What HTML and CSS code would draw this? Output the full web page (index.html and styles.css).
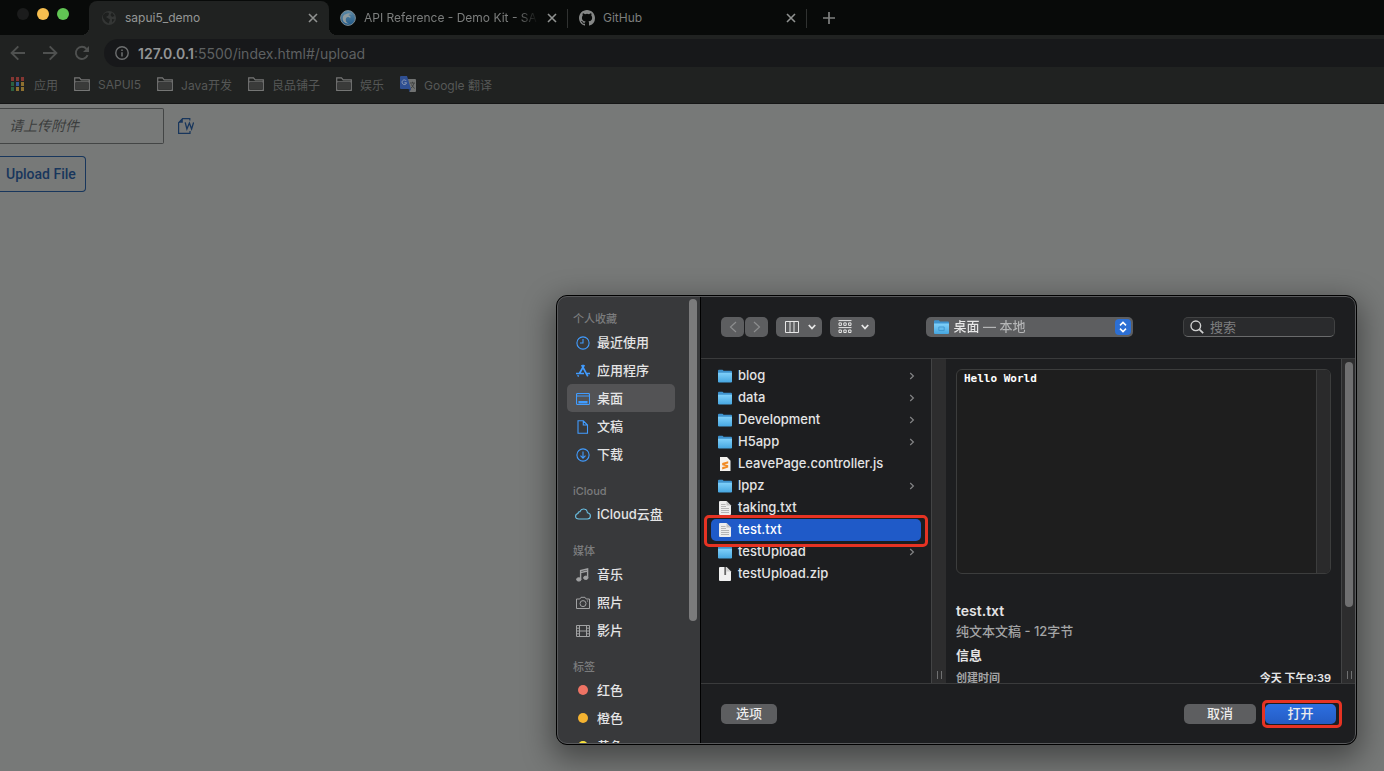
FILE: index.html
```html
<!DOCTYPE html>
<html lang="zh-CN">
<head>
<meta charset="utf-8">
<title>sapui5_demo</title>
<link rel="stylesheet" href="styles.css">
</head>
<body>
<svg class="defs" aria-hidden="true">
  <defs>
    <linearGradient id="folder-fill" x1="0" y1="0" x2="0" y2="1"><stop offset="0" stop-color="#7fd0fa"/><stop offset="1" stop-color="#46a6e0"/></linearGradient>
    <linearGradient id="swirl-fill" x1="0" y1="0" x2="0" y2="1"><stop offset="0" stop-color="#5d8aa6"/><stop offset="1" stop-color="#1f5888"/></linearGradient>
  </defs>
  <symbol id="folder" viewBox="0 0 14 13"><path d="M0 1.2Q0 .2 1 .2H4.5L5.6 1.3H13Q14 1.3 14 2.3V4H0Z" fill="#3e92cd"/><path d="M0 3.3H14V12.2Q14 13 13 13H1Q0 13 0 12.2Z" fill="url(#folder-fill)"/></symbol>
  <symbol id="doc" viewBox="0 0 14 14"><path d="M1 1Q1 0 2 0H8.5L13 4.5V13Q13 14 12 14H2Q1 14 1 13Z" fill="#ededed"/><path d="M8.5 0V4.5H13Z" fill="#c4c4c4"/><path d="M3 3.5H7.5M3 5.5H8M3 7.5H11M3 9.5H11M3 11.5H11" stroke="#a6a6a6" stroke-width=".8"/></symbol>
  <symbol id="js" viewBox="0 0 14 14"><path d="M2 0H9L12.5 3.8V14H2Z" fill="#f4f2ee"/><path d="M10.2 4.2L4.2 6V8.2L8 9.2L4.2 10V12.4L10.2 10.4V8.2L6.6 7.2L10.2 6.4Z" fill="#f18b24"/></symbol>
  <symbol id="zip" viewBox="0 0 14 14"><path d="M1 1Q1 0 2 0H8.5L13 4.5V13Q13 14 12 14H2Q1 14 1 13Z" fill="#f0f0f0"/><path d="M8.5 0V4.5H13Z" fill="#cfcfcf"/><path d="M7.2 0V8" stroke="#666" stroke-width="1.8"/></symbol>
  <symbol id="chev" viewBox="0 0 6 8"><path d="M1.2 1L4.4 4L1.2 7" fill="none" stroke="#838485" stroke-width="1.2"/></symbol>
  <symbol id="close" viewBox="0 0 10 10"><path d="M1 1L9 9M9 1L1 9" stroke="currentColor" stroke-width="1.6"/></symbol>
  <symbol id="bookmark-folder" viewBox="0 0 16 14"><path d="M.7 13.3V.9H5.5L7.2 2.8H15.3V13.3Z" fill="none" stroke="#757675" stroke-width="1.2"/><path d="M.7 4.8H15.3" stroke="#757675"/><path d="M2 6H14V12H2Z" fill="#3a3b3a"/></symbol>
</svg>

<header class="browser">
  <nav class="tabs" aria-label="标签页">
    <div class="lights"><i class="light off"></i><i class="light yellow"></i><i class="light green"></i></div>
    <div class="tab active">
      <svg class="fav" viewBox="0 0 16 16"><circle cx="8" cy="8" r="7" fill="#343635"/><path d="M2 5Q5 1.6 8 3L7.4 5.6L5 7L9 9.4L7.6 13.4L4.6 11.6L2 8ZM11 2.6L13.6 6L11 7L9.4 5ZM11 9L13.6 9.6L11 12.4Z" fill="#1e201f"/></svg>
      <span class="tab-title">sapui5_demo</span>
      <button class="tab-close" aria-label="关闭"><svg><use href="#close"/></svg></button>
    </div>
    <div class="tab">
      <svg class="fav" viewBox="0 0 16 16"><circle cx="8" cy="8" r="7.4" fill="url(#swirl-fill)" stroke="#7c8990" stroke-width="1"/><path d="M3.4 11.5Q1 5 6.3 4Q9 2.5 12.2 4.5Q9.5 3.8 8.5 5.2Q11.5 5.8 10 8.2Q9.5 6.8 7.8 7Q5 7.8 6 11.5Q7 13.2 9 13.5Q5.3 14 3.4 11.5Z" fill="#8f9a9e"/></svg>
      <span class="tab-title fade">API Reference - Demo Kit - SAPUI5</span>
      <button class="tab-close" aria-label="关闭"><svg><use href="#close"/></svg></button>
    </div>
    <div class="tab">
      <svg class="fav" viewBox="0 0 16 16"><path fill="#858786" d="M8 0C3.58 0 0 3.58 0 8c0 3.54 2.29 6.53 5.47 7.59.4.07.55-.17.55-.38 0-.19-.01-.82-.01-1.49-2.01.37-2.53-.49-2.69-.94-.09-.23-.48-.94-.82-1.13-.28-.15-.68-.52-.01-.53.63-.01 1.08.58 1.23.82.72 1.21 1.87.87 2.33.66.07-.52.28-.87.51-1.07-1.78-.2-3.64-.89-3.64-3.95 0-.87.31-1.59.82-2.15-.08-.2-.36-1.02.08-2.12 0 0 .67-.21 2.2.82a7.6 7.6 0 0 1 4 0c1.53-1.04 2.2-.82 2.2-.82.44 1.1.16 1.92.08 2.12.51.56.82 1.27.82 2.15 0 3.07-1.87 3.75-3.65 3.95.29.25.54.73.54 1.48 0 1.07-.01 1.93-.01 2.2 0 .21.15.46.55.38A8 8 0 0 0 16 8c0-4.42-3.58-8-8-8Z"/></svg>
      <span class="tab-title">GitHub</span>
      <button class="tab-close" aria-label="关闭"><svg><use href="#close"/></svg></button>
    </div>
    <button class="new-tab" aria-label="新标签页"><svg viewBox="0 0 12 12"><path d="M6 0V12M0 6H12" stroke="#7f8180" stroke-width="1.7"/></svg></button>
  </nav>

  <div class="address-row">
    <button class="nav" aria-label="后退"><svg viewBox="0 0 16 16"><path d="M15 8H2M8.3 1.3L1.6 8L8.3 14.7" fill="none" stroke="#4f5150" stroke-width="1.9"/></svg></button>
    <button class="nav" aria-label="前进"><svg viewBox="0 0 16 16"><path d="M1 8H14M7.7 1.3L14.4 8L7.7 14.7" fill="none" stroke="#4f5150" stroke-width="1.9"/></svg></button>
    <button class="nav" aria-label="重新加载"><svg viewBox="0 0 16 16"><path d="M13.6 10.2A6.1 6.1 0 1 1 12.5 3.8" fill="none" stroke="#4f5150" stroke-width="1.9"/><path d="M15 1V7H9Z" fill="#4f5150"/></svg></button>
    <div class="url">
      <svg viewBox="0 0 14 14"><circle cx="7" cy="7" r="6.2" fill="none" stroke="#6d6f70" stroke-width="1.4"/><path d="M7 6.2V10.5M7 3.4V5" stroke="#6d6f70" stroke-width="1.5"/></svg>
      <a href="#/upload"><b>127.0.0.1</b>:5500/index.html#/upload</a>
    </div>
  </div>

  <nav class="bookmarks" aria-label="书签">
    <a href="#apps"><svg class="apps" viewBox="0 0 13 14"><path d="M0 0H3V4H0ZM5 0H8V4H5ZM10 0H13V4H10Z" fill="#853632"/><path d="M0 5H3V9H0Z" fill="#2b6040"/><path d="M5 5H8V9H5Z" fill="#335a96"/><path d="M10 5H13V9H10Z" fill="#8d7030"/><path d="M0 10H3V14H0Z" fill="#2b6040"/><path d="M5 10H8V14H5ZM10 10H13V14H10Z" fill="#8d7030"/></svg>应用</a>
    <a href="#sapui5"><svg><use href="#bookmark-folder"/></svg>SAPUI5</a>
    <a href="#java"><svg><use href="#bookmark-folder"/></svg>Java开发</a>
    <a href="#shop"><svg><use href="#bookmark-folder"/></svg>良品铺子</a>
    <a href="#fun"><svg><use href="#bookmark-folder"/></svg>娱乐</a>
    <a href="#translate"><svg class="gt" viewBox="0 0 16 16"><path d="M7 3H15Q16 3 16 4V15Q16 16 15 16H9.5Z" fill="#707271"/><path d="M1 0H7L11 13H1Q0 13 0 12V1Q0 0 1 0Z" fill="#2f4f92"/><path d="M8.5 13H11L9.5 16Z" fill="#243c70"/><path d="M6.3 5A2.3 2.3 0 1 0 6.6 6.8H4.4" fill="none" stroke="#8f9cb6"/><path d="M10 7H15M12.5 5.8V7M14 7Q13 11 10.8 12.3M11.5 8.5Q12.5 11 14.8 12.5" fill="none" stroke="#3c3e3d" stroke-width=".9"/></svg>Google 翻译</a>
  </nav>
</header>

<main class="page">
  <div class="uploader">
    <input class="file-field" type="text" placeholder="请上传附件" aria-label="请上传附件">
    <button class="browse" aria-label="选择文件"><svg viewBox="0 0 16 16"><path d="M11.8 2.4V.6H4.6L.6 4.8V15.4H12V13" fill="none" stroke="#18365c" stroke-width="1.2"/><path d="M.6 4.8H4.8V.5Z" fill="#18365c"/><path d="M7.2 4.4L8.9 11L11.4 5L13.6 11L15.6 4.4" fill="none" stroke="#18365c" stroke-width="1.3"/></svg></button>
  </div>
  <button class="upload">Upload File</button>
</main>

<section class="dialog" role="dialog" aria-label="打开">
  <aside class="sidebar">
    <nav class="places">
      <section>
        <h2>个人收藏</h2>
        <a href="#recent"><svg viewBox="0 0 14 14"><circle cx="7" cy="7" r="6.1"/><path d="M7 3V7H4"/></svg>最近使用</a>
        <a href="#applications"><svg viewBox="0 0 14 14"><path d="M8.3 1L3.4 9.5M5.7 1L11.8 12.4M0 9.5H8M10.5 9.5H14M2.5 11.3L1.8 12.5" stroke-width="1.7"/></svg>应用程序</a>
        <a class="current" href="#desktop"><svg viewBox="0 0 14 14"><rect x=".5" y="1.5" width="13" height="11" rx="1"/><path d="M.5 4H13.5"/><path d="M3 9.5H11V11H3Z" fill="#419cff"/></svg>桌面</a>
        <a href="#documents"><svg viewBox="0 0 14 14"><path d="M2 .8H7.3L11.5 5V13.2H2ZM7.3 .8V5H11.5"/></svg>文稿</a>
        <a href="#downloads"><svg viewBox="0 0 14 14"><circle cx="7" cy="7" r="6.1"/><path d="M7 3.5V10M4.5 7.7L7 10.2L9.5 7.7"/></svg>下载</a>
      </section>
      <section>
        <h2>iCloud</h2>
        <a href="#icloud"><svg class="cloud" viewBox="0 0 16 12"><path d="M4 11Q.6 11 .6 8.2Q.6 6 3 5.5Q3 3.5 5 3.6Q6 1 8.6 1Q12 1 12.4 4.8Q15.4 5.2 15.4 8Q15.4 11 12.4 11Z"/></svg>iCloud云盘</a>
      </section>
      <section>
        <h2>媒体</h2>
        <a href="#music"><svg class="media" viewBox="0 0 14 14"><path d="M4.6 11.2V2.6L11.6 1V9.6M4.6 4.6L11.6 3" stroke-width="1.4"/><ellipse cx="2.8" cy="11.4" rx="2.2" ry="1.7" fill="#a1a2a3"/><ellipse cx="9.8" cy="9.8" rx="2.2" ry="1.7" fill="#a1a2a3"/></svg>音乐</a>
        <a href="#photos"><svg class="media" viewBox="0 0 14 14"><path d="M.5 3H3.8L5 1.3H9L10.2 3H13.5V12.5H.5Z"/><circle cx="7" cy="7.6" r="3"/><path d="M11 5H12"/></svg>照片</a>
        <a href="#movies"><svg class="media" viewBox="0 0 14 14"><path d="M.5 1.5H13.5V12.5H.5ZM3.5 1.5V12.5M10.5 1.5V12.5M3.5 7H10.5M.5 4.2H3.5M.5 7H3.5M.5 9.8H3.5M10.5 4.2H13.5M10.5 7H13.5M10.5 9.8H13.5"/></svg>影片</a>
      </section>
      <section>
        <h2>标签</h2>
        <a href="#red"><i class="dot red"></i>红色</a>
        <a href="#orange"><i class="dot orange"></i>橙色</a>
        <a href="#yellow"><i class="dot yellow"></i>黄色</a>
      </section>
    </nav>
    <div class="thumb side-thumb"></div>
  </aside>

  <div class="content">
    <div class="toolbar">
      <div class="pair">
        <button class="tool arrow" aria-label="上一个"><svg viewBox="0 0 8 12"><path d="M7 1L1.5 6L7 11"/></svg></button>
        <button class="tool arrow" aria-label="下一个"><svg viewBox="0 0 8 12"><path d="M1 1L6.5 6L1 11"/></svg></button>
      </div>
      <button class="tool view" aria-label="分栏显示"><svg class="glyph" viewBox="0 0 14 12"><path d="M.5 .5H13.5V11.5H.5ZM5 .5V11.5M9 .5V11.5"/></svg><svg class="down" viewBox="0 0 8 6"><path d="M.8 1L4 4.5L7.2 1"/></svg></button>
      <button class="tool view grouping" aria-label="分组"><svg class="glyph group" viewBox="0 0 14 14"><path d="M.5 .6H13.5M.5 7.6H13.5M1 2.9H3.4V5.4H1ZM5.8 2.9H8.2V5.4H5.8ZM10.6 2.9H13V5.4H10.6ZM1 10H3.4V12.5H1ZM5.8 10H8.2V12.5H5.8ZM10.6 10H13V12.5H10.6Z"/></svg><svg class="down" viewBox="0 0 8 6"><path d="M.8 1L4 4.5L7.2 1"/></svg></button>
      <label class="location">
        <svg class="loc-folder" viewBox="0 0 14 13"><use href="#folder" width="14" height="13"/><path d="M4.5 6.5H9.5V9.8H4.5Z" fill="none" stroke="#3d94cd" stroke-width=".8"/></svg>
        <select aria-label="位置"><option>桌面 — 本地</option></select>
        <svg class="stepper" viewBox="0 0 16 16"><rect width="16" height="16" rx="4" fill="#2c6fd4"/><path d="M5 6.4L8 3.4L11 6.4M5 9.6L8 12.6L11 9.6" fill="none" stroke="#fff" stroke-width="1.5"/></svg>
      </label>
      <label class="search">
        <svg viewBox="0 0 14 14"><circle cx="5.8" cy="5.8" r="4.8" fill="none" stroke="#cfd0d0" stroke-width="1.4"/><path d="M9.3 9.3L13.2 13.2" stroke="#cfd0d0" stroke-width="1.7"/></svg>
        <input type="text" placeholder="搜索" aria-label="搜索">
      </label>
    </div>

    <div class="panes">
      <div class="files">
        <button class="file"><svg class="f"><use href="#folder"/></svg><span>blog</span><svg class="c"><use href="#chev"/></svg></button>
        <button class="file"><svg class="f"><use href="#folder"/></svg><span>data</span><svg class="c"><use href="#chev"/></svg></button>
        <button class="file"><svg class="f"><use href="#folder"/></svg><span>Development</span><svg class="c"><use href="#chev"/></svg></button>
        <button class="file"><svg class="f"><use href="#folder"/></svg><span>H5app</span><svg class="c"><use href="#chev"/></svg></button>
        <button class="file"><svg class="f"><use href="#js"/></svg><span>LeavePage.controller.js</span></button>
        <button class="file"><svg class="f"><use href="#folder"/></svg><span>lppz</span><svg class="c"><use href="#chev"/></svg></button>
        <button class="file"><svg class="f"><use href="#doc"/></svg><span>taking.txt</span></button>
        <button class="file selected marked"><svg class="f"><use href="#doc"/></svg><span>test.txt</span></button>
        <button class="file"><svg class="f"><use href="#folder"/></svg><span>testUpload</span><svg class="c"><use href="#chev"/></svg></button>
        <button class="file"><svg class="f"><use href="#zip"/></svg><span>testUpload.zip</span></button>
      </div>
      <div class="track"><i class="grip"></i></div>
      <div class="preview">
        <div class="sheet"><pre>Hello World</pre><div class="sheet-track"></div></div>
        <h3>test.txt</h3>
        <p class="kind">纯文本文稿 - 12字节</p>
        <h4>信息</h4>
        <p class="meta"><span>创建时间</span><b>今天 下午9:39</b></p>
      </div>
      <div class="track scroll"><div class="thumb"></div><i class="grip"></i></div>
    </div>

    <div class="actions">
      <button class="btn options">选项</button>
      <button class="btn">取消</button>
      <button class="btn primary marked">打开</button>
    </div>
  </div>
</section>
</body>
</html>
```

FILE: styles.css
```css
* { box-sizing: border-box; }
html, body { height: 100%; }
body {
  margin: 0;
  display: flex;
  flex-direction: column;
  overflow: hidden;
  position: relative;
  background: #777978;
  font-family: Inter, "Noto Sans CJK SC", sans-serif;
  font-size: 13px;
}
button { font: inherit; border: 0; padding: 0; background: none; color: inherit; }
a { color: inherit; text-decoration: none; }
h2, h3, h4, p, pre { margin: 0; }
svg { flex: none; display: block; }
.defs { position: absolute; width: 0; height: 0; }

/* Browser chrome */
.browser { background: #202221; border-bottom: 1px solid #151616; }
.tabs { display: flex; height: 35px; background: #080a09; font-size: 12px; color: #7c7e7d; }
.lights { display: flex; gap: 8px; width: 89px; padding: 8px 0 0 17px; }
.light { width: 12px; height: 12px; border-radius: 50%; }
.light.off { background: #1b1c1c; }
.light.yellow { background: #f6be4f; }
.light.green { background: #61c554; }
.tab { display: flex; align-items: center; width: 239px; padding: 0 11px; position: relative; }
.tab:not(.active)::after { content: ""; position: absolute; right: 0; top: 9px; width: 1px; height: 19px; background: #303231; }
.tab.active { width: 240px; margin-top: 1px; padding-left: 12px; background: #202221; border-radius: 8px 8px 0 0; color: #949695; }
.tab.active::before, .tab.active::after { content: ""; position: absolute; bottom: 0; width: 8px; height: 8px; }
.tab.active::before { left: -8px; background: radial-gradient(circle at 0 0, #080a09 8px, #202221 8px); }
.tab.active::after { right: -8px; background: radial-gradient(circle at 100% 0, #080a09 8px, #202221 8px); z-index: 1; }
.fav { width: 16px; height: 16px; margin-right: 8px; }
.tab-title { flex: 1; overflow: hidden; white-space: nowrap; margin-right: 9px; line-height: 18px; }
.tab-title.fade { -webkit-mask-image: linear-gradient(90deg, #000 88%, transparent); mask-image: linear-gradient(90deg, #000 88%, transparent); }
.tab-close svg { width: 10px; height: 10px; }
.tab-close { color: #909291; }
.new-tab { margin-left: 16px; }
.new-tab svg { width: 12px; height: 12px; }
.address-row { display: flex; align-items: center; padding: 4px 0 0 10px; }
.nav { width: 32px; }
.nav svg { width: 16px; height: 16px; }
.url { flex: 1; display: flex; align-items: center; gap: 9px; height: 28px; margin-right: -14px; margin-left: -2px; padding-left: 11px; border-radius: 14px; background: #17181a; color: #5e6061; font-size: 14px; }
.url b { font-weight: 600; color: #929495; }
.url svg { width: 14px; height: 14px; }
.bookmarks { display: flex; align-items: center; gap: 16px; height: 36px; padding: 0 0 2px 11px; color: #565857; font-size: 12px; }
.bookmarks a { display: flex; align-items: center; gap: 8px; }
.bookmarks svg { width: 16px; height: 14px; }
.bookmarks .apps { width: 13px; margin-right: 2px; }
.bookmarks .gt { height: 16px; }

/* Page */
.page { flex: 1; padding-top: 4px; }
.uploader { display: flex; align-items: center; gap: 14px; margin-bottom: 12px; }
.file-field { width: 164px; height: 36px; padding: 0 9px 2px; border: 1px solid #434545; border-left: 0; border-radius: 0 2px 2px 0; background: #777978; font: 14px "Noto Sans", "Noto Sans CJK SC", sans-serif; }
.file-field::placeholder { color: #3b3d3d; font-style: italic; opacity: 1; }
.browse svg { width: 16px; height: 16px; }
.upload { height: 36px; padding: 0 9px 0 6px; border: 1px solid #18365c; border-left: 0; border-radius: 0 4px 4px 0; color: #18365c; font-family: Roboto, sans-serif; font-size: 14px; font-weight: 500; }

/* Open panel */
.dialog {
  position: absolute;
  top: 295px;
  right: 27px;
  width: 801px;
  max-width: 100%;
  height: 450px;
  display: flex;
  overflow: hidden;
  border: 1px solid #000;
  border-radius: 11px;
  background: #1d1e20;
  color: #e4e4e5;
  font-weight: 500;
  box-shadow: 0 10px 30px 4px rgba(0, 0, 0, .42);
}
.dialog::after { content: ""; position: absolute; inset: 0; border: 1px solid #58595b; border-radius: 10px; pointer-events: none; }
.sidebar { display: flex; justify-content: space-between; width: 144px; padding: 0 3px 0 10px; background: #38393b; border-right: 1px solid #000; }
.places { display: flex; flex-direction: column; gap: 14px; width: 108px; padding-top: 14px; }
.places h2 { padding-left: 6px; height: 18px; line-height: 18px; font-size: 11px; font-weight: 500; color: #7b7c7d; }
.places a { display: flex; align-items: center; gap: 7px; height: 28px; padding: 0 0 2px 9px; border-radius: 5px; white-space: nowrap; }
.places a.current { background: #535355; }
.places svg { width: 14px; height: 14px; margin-top: 3px; fill: none; stroke: #419cff; stroke-width: 1.1; }
.places .cloud { width: 16px; height: 12px; margin: 1px -1px 0; stroke: #6cc4e8; }
.places .media { stroke: #a1a2a3; stroke-width: 1; }
.dot { width: 10px; height: 10px; margin: 2px 2px 0; border-radius: 50%; }
.dot.red { background: #ee7364; }
.dot.orange { background: #f4b331; }
.dot.yellow { background: #f8e23c; }
.thumb { width: 8px; border-radius: 4px; background: #7b7b7c; }
.side-thumb { height: 322px; margin-top: 3px; }

.content { flex: 1; min-width: 0; display: flex; flex-direction: column; }
.toolbar { display: flex; align-items: center; gap: 8px; height: 63px; padding: 0 21px 1px 20px; border-bottom: 1px solid #3a3b3c; }
.pair { display: flex; gap: 1px; }
.tool { display: flex; align-items: center; justify-content: center; height: 20px; border-radius: 5px; background: #5d5e60; }
.tool svg { fill: none; stroke: #e6e6e6; }
.arrow { width: 23px; }
.arrow svg { width: 8px; height: 12px; stroke: #8c8d8e; stroke-width: 1.2; }
.view { width: 46px; gap: 9px; padding-left: 2px; }
.grouping { width: 45px; }
.glyph { width: 14px; height: 12px; stroke-width: 1; }
.glyph.group { height: 14px; }
.down { width: 8px; height: 6px; stroke-width: 1.8; }
.location { display: flex; align-items: center; width: 207px; height: 20px; margin: 0 auto; padding: 0 2px 0 8px; border-radius: 5px; background: #5d5e60; }
.loc-folder { width: 15px; height: 14px; }
.location select { flex: 1; min-width: 0; height: 20px; appearance: none; border: 0; padding: 0 5px 2px; font: inherit; color: transparent; background: linear-gradient(90deg, #e6e6e6 34px, #b4b5b6 34px); -webkit-background-clip: text; background-clip: text; }
.stepper { width: 16px; height: 16px; }
.search { display: flex; align-items: center; gap: 6px; width: 152px; height: 20px; padding: 0 6px; border: 1px solid #414243; border-bottom-color: #6a6b6c; border-radius: 5px; background: #2a2b2d; }
.search svg { width: 14px; height: 14px; }
.search input { width: 100%; min-width: 0; border: 0; padding: 0; background: none; font: inherit; color: #e4e4e5; }
.search input::placeholder { color: #7e7f80; opacity: 1; font-weight: 400; }

.panes { display: flex; flex: 1; min-height: 0; border-bottom: 1px solid #3a3b3c; }
.files { width: 230px; padding: 6px 10px; }
.file { display: flex; align-items: center; gap: 6px; width: 100%; height: 22px; padding: 0 6px 0 7px; border-radius: 5px; text-align: left; position: relative; }
.file span { flex: 1; white-space: nowrap; padding-bottom: 2px; }
.file .f { width: 14px; height: 14px; }
.file .c { width: 6px; height: 8px; }
.file.selected { background: #1f5ac8; color: #fff; }
.marked { position: relative; }
.marked::after { content: ""; position: absolute; inset: -4px -7px -6px; border: 3px solid #e63323; border-radius: 5px; z-index: 2; }
.track { display: flex; flex-direction: column; justify-content: flex-end; align-items: center; width: 15px; background: #2d2d2e; border-left: 1px solid #434445; }
.track.scroll { justify-content: space-between; padding-top: 3px; }
.track .thumb { height: 245px; background: #707071; }
.grip { width: 5px; height: 8px; margin-bottom: 4px; border: solid #707172; border-width: 0 1px; }
.preview { flex: 1; min-width: 0; padding: 10px; overflow: hidden; }
.sheet { display: flex; justify-content: space-between; height: 205px; margin-bottom: 27px; border: 1px solid #3c3d3d; border-radius: 6px; background: #1e1e1e; overflow: hidden; }
.sheet pre { padding: 2px 7px; font: bold 11px/14px "DejaVu Sans Mono", monospace; color: #fff; }
.sheet-track { width: 14px; background: #2a2a2b; border-left: 1px solid #3c3d3d; }
.preview h3 { font-size: 14px; line-height: 20px; font-weight: 600; }
.kind { line-height: 20px; color: #a3a4a5; }
.preview h4 { padding: 4px 0; font-size: 13px; line-height: 20px; }
.meta { display: flex; justify-content: space-between; font-size: 11px; line-height: 18px; }
.meta span { color: #a3a4a5; font-weight: 700; }
.meta b { font-weight: 600; }

.actions { display: flex; align-items: center; gap: 9px; height: 60px; padding: 0 20px; }
.btn { width: 72px; height: 20px; padding-bottom: 2px; border-radius: 5px; background: #5d5e60; color: #ededed; line-height: 18px; }
.btn.options { width: 56px; margin-right: auto; }
.btn.primary { width: 71px; background: linear-gradient(#2d6fe0, #245cc4); }
.btn.primary::after { inset: -4px -6px -4px -3px; }
```
